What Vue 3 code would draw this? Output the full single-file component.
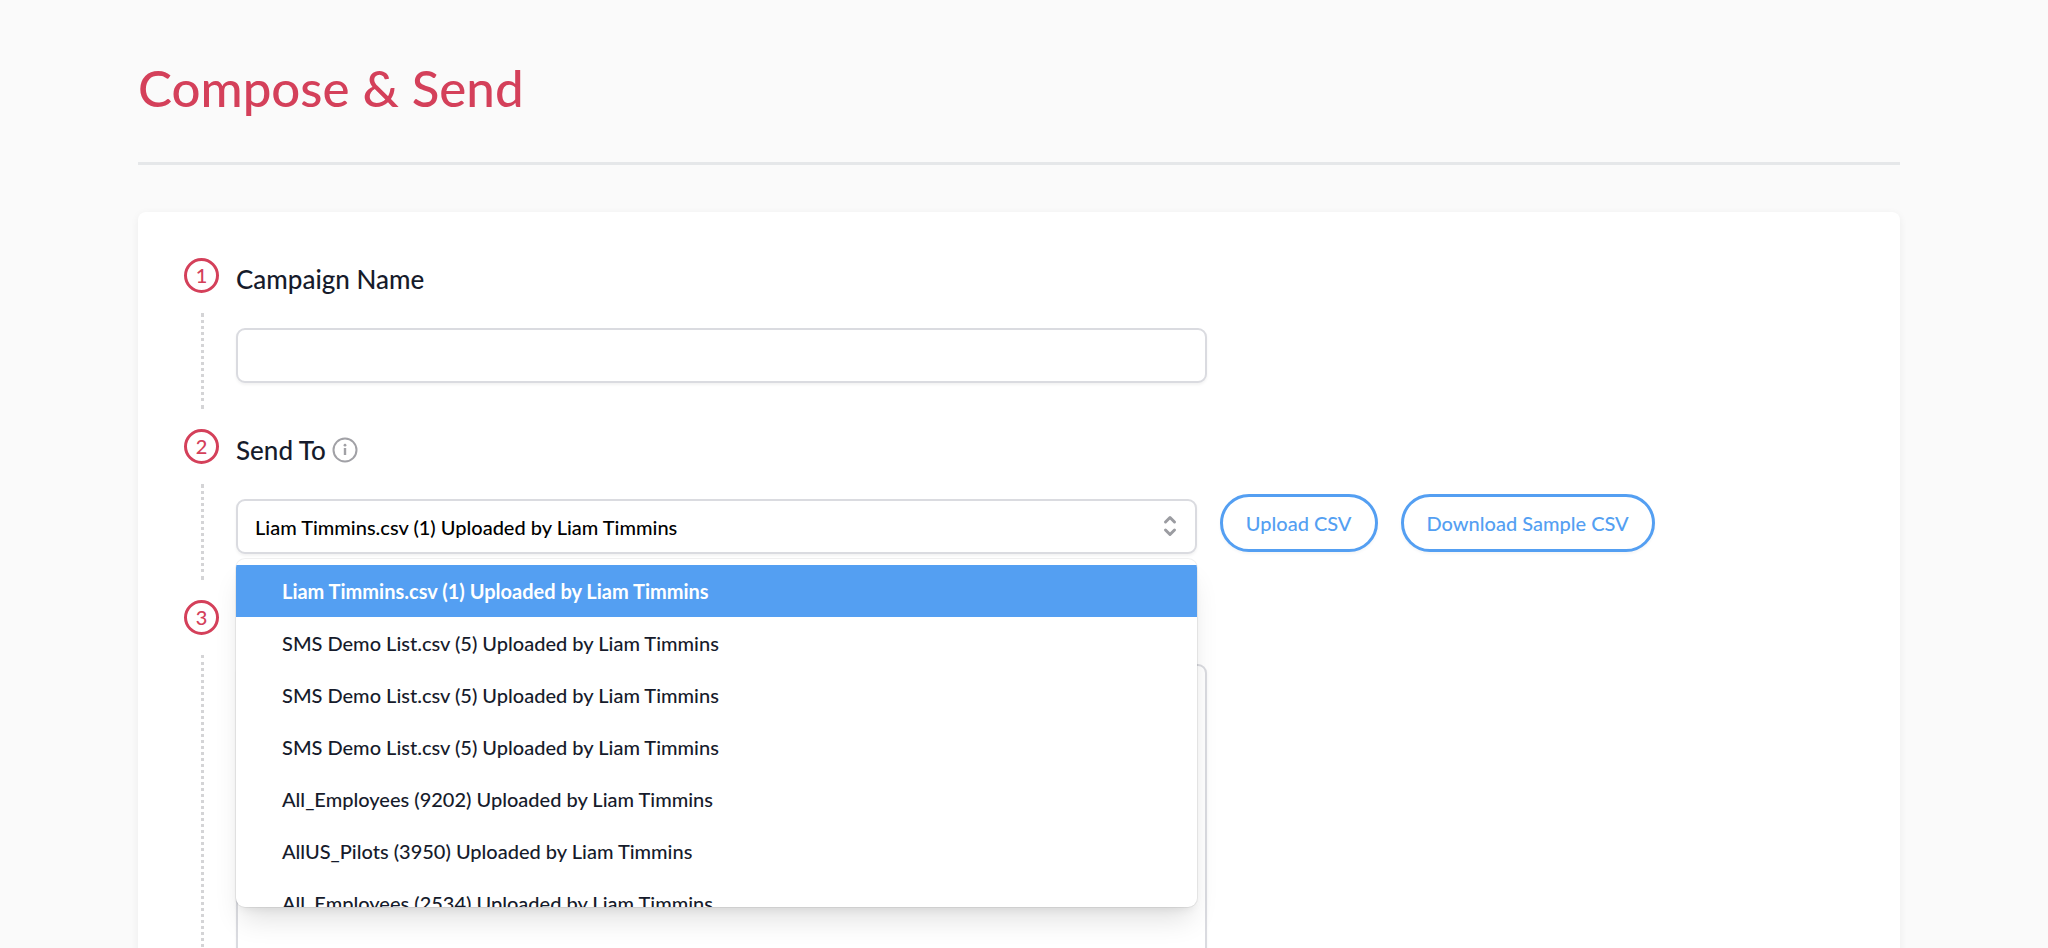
<script setup>
import { ref } from 'vue'

const campaign = ref('')
const message = ref('')
const selected = ref(0)
const lists = [
  'Liam Timmins.csv (1) Uploaded by Liam Timmins',
  'SMS Demo List.csv (5) Uploaded by Liam Timmins',
  'SMS Demo List.csv (5) Uploaded by Liam Timmins',
  'SMS Demo List.csv (5) Uploaded by Liam Timmins',
  'All_Employees (9202) Uploaded by Liam Timmins',
  'AllUS_Pilots (3950) Uploaded by Liam Timmins',
  'All_Employees (2534) Uploaded by Liam Timmins'
]
</script>

<template>
  <main class="page">
    <header class="page-header">
      <h1>Compose &amp; Send</h1>
    </header>

    <form class="card" @submit.prevent>
      <section class="step">
        <div class="rail">
          <span class="badge">1</span>
          <span class="dots"></span>
        </div>
        <div class="content">
          <div class="heading"><label for="campaign">Campaign Name</label></div>
          <input id="campaign" v-model="campaign" class="control wide" type="text" />
        </div>
      </section>

      <section class="step">
        <div class="rail">
          <span class="badge">2</span>
          <span class="dots"></span>
        </div>
        <div class="content">
          <div class="heading">
            <label for="send-to">Send To</label>
            <svg class="info" viewBox="0 0 26 26" fill="none" aria-hidden="true">
              <circle cx="13" cy="13" r="11.5" stroke="#a1a1a6" stroke-width="2" />
              <rect x="11.8" y="11" width="2.4" height="7" fill="#a1a1a6" />
              <circle cx="13" cy="8.2" r="1.4" fill="#a1a1a6" />
            </svg>
          </div>
          <div class="send-row">
            <div class="picker">
              <select id="send-to" v-model="selected" class="control">
                <option v-for="(name, i) in lists" :key="i" :value="i">{{ name }}</option>
              </select>
              <svg class="chevrons" viewBox="0 0 14 22" fill="none" stroke="#9b9ca1" stroke-width="3" stroke-linecap="round" stroke-linejoin="round" aria-hidden="true">
                <path d="M2.5 7 L7 2.5 L11.5 7 M2.5 15 L7 19.5 L11.5 15" />
              </svg>
              <ul class="menu" role="listbox" aria-label="Send To">
                <li
                  v-for="(name, i) in lists"
                  :key="i"
                  role="option"
                  :aria-selected="i === selected"
                  :class="{ active: i === selected }"
                  @click="selected = i"
                >{{ name }}</li>
              </ul>
            </div>
            <button type="button" class="pill">Upload CSV</button>
            <button type="button" class="pill">Download Sample CSV</button>
          </div>
        </div>
      </section>

      <section class="step tall">
        <div class="rail">
          <span class="badge">3</span>
          <span class="dots"></span>
        </div>
        <div class="content">
          <div class="heading compact"></div>
          <textarea v-model="message" class="control wide" aria-label="Message"></textarea>
        </div>
      </section>
    </form>
  </main>
</template>

<style>
body {
  background: #fafafa;
}
</style>

<style scoped>
.page {
  box-sizing: border-box;
  height: 100vh;
  overflow: hidden;
  padding: 48px 148px 0 138px;
  background: #fafafa;
  color: #161b2b;
  font-family: Lato, sans-serif;
  font-size: 20px;
}
.page-header {
  padding-bottom: 34px;
  border-bottom: 3px solid #e5e7e9;
  margin-bottom: 47px;
}
h1 {
  margin: 0;
  color: #d4405a;
  font-size: 51px;
  font-weight: 500;
  line-height: 80px;
}
.card {
  padding: 46px;
  border-radius: 8px;
  background: #fff;
  box-shadow: 0 2px 8px rgba(0, 0, 0, 0.06);
}
.step {
  display: grid;
  grid-template-columns: 35px 1fr;
  column-gap: 17px;
  min-height: 171px;
}
.tall {
  min-height: 560px;
}
.rail {
  display: flex;
  flex-direction: column;
  align-items: center;
}
.badge {
  box-sizing: border-box;
  width: 35px;
  height: 35px;
  border: 3px solid #d4405a;
  border-radius: 50%;
  color: #d4405a;
  font-size: 20px;
  font-weight: 500;
  line-height: 28px;
  text-align: center;
}
.dots {
  flex: 1;
  margin: 20px 0 20px 2px;
  border-left: 3px dotted #d4d4d6;
}
.heading {
  display: flex;
  align-items: center;
  gap: 6px;
  height: 42px;
  margin-bottom: 28px;
  font-size: 26px;
  font-weight: 500;
}
.compact {
  margin-bottom: 22px;
}
.info {
  width: 26px;
  height: 26px;
}
.control {
  box-sizing: border-box;
  display: block;
  width: 100%;
  height: 55px;
  padding: 0 17px;
  border: 2px solid #dadbe0;
  border-radius: 9px;
  outline: none;
  background: #fff;
  box-shadow: 0 2px 3px rgba(0, 0, 0, 0.05);
  color: #000;
  font: 500 20px Lato, sans-serif;
}
.wide {
  width: 60%;
}
select.control {
  appearance: none;
}
textarea.control {
  height: 400px;
  resize: none;
}
.send-row {
  display: flex;
  align-items: flex-start;
  gap: 23px;
}
.picker {
  position: relative;
  width: calc(60% - 10px);
}
.chevrons {
  position: absolute;
  top: 16px;
  right: 20px;
  width: 14px;
  height: 22px;
  pointer-events: none;
}
.menu {
  position: absolute;
  z-index: 2;
  top: calc(100% + 5px);
  left: 0;
  right: 0;
  height: 342px;
  margin: 0;
  padding: 6px 0 0;
  overflow: hidden;
  border-radius: 9px;
  background: #fff;
  box-shadow: 0 0 0 1px rgba(0, 0, 0, 0.06), 0 18px 28px -6px rgba(0, 0, 0, 0.12), 0 6px 10px -4px rgba(0, 0, 0, 0.08);
  list-style: none;
}
.menu li {
  padding: 0 46px;
  font-weight: 500;
  line-height: 52px;
}
.menu .active {
  background: #549ff2;
  color: #fff;
  font-weight: 700;
}
.pill {
  height: 58px;
  margin-top: -5px;
  padding: 0 23px;
  border: 3px solid #549ff2;
  border-radius: 29px;
  background: #fff;
  color: #549ff2;
  box-shadow: 0 2px 3px rgba(0, 0, 0, 0.04);
  font: 500 20px Lato, sans-serif;
  white-space: nowrap;
}
</style>
